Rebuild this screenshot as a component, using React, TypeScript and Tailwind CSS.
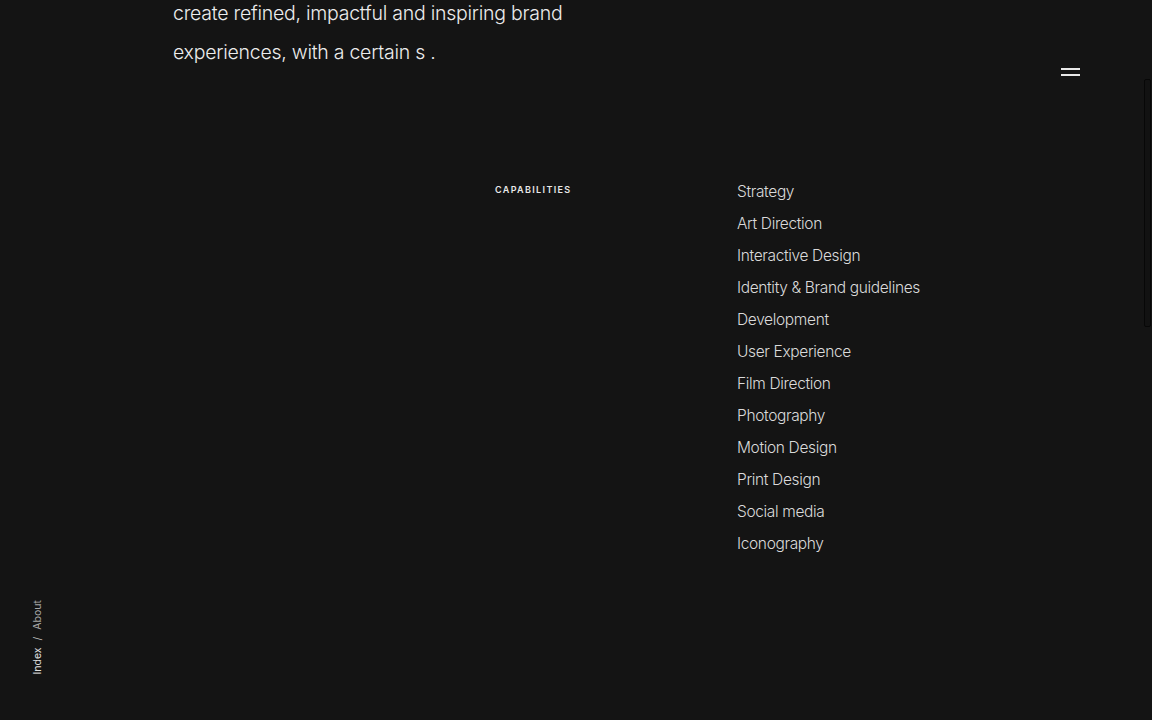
const capabilities = [
  'Strategy',
  'Art Direction',
  'Interactive Design',
  'Identity & Brand guidelines',
  'Development',
  'User Experience',
  'Film Direction',
  'Photography',
  'Motion Design',
  'Print Design',
  'Social media',
  'Iconography',
];

export default function App() {
  return (
    <div className="relative h-[720px] w-full overflow-hidden bg-[#141414] font-['Inter',sans-serif] text-[#e4e4e4]">
      <main className="pl-[173px]">
        <p className="-mt-[6px] w-[440px] text-[19.5px] font-light leading-[39px] tracking-[-0.25px] text-[#ececec]">
          create refined, impactful and inspiring brand experiences, with a certain s .
        </p>

        <section className="mt-[104px] flex">
          <div className="w-[322px]" />
          <div className="w-[242px] pt-[8px]">
            <h2 className="text-[9px] font-semibold uppercase leading-[12px] tracking-[1.35px] text-[#e8e8e8]">
              Capabilities
            </h2>
          </div>
          <ul className="flex flex-col">
            {capabilities.map((item) => (
              <li key={item} className="text-[15.5px] font-light leading-[32px] tracking-[-0.35px] text-[#dadada]">
                {item}
              </li>
            ))}
          </ul>
        </section>
      </main>

      <button aria-label="Menu" className="absolute left-[1061px] top-[68px] flex w-[19px] flex-col gap-[4px]">
        <span className="block h-[2px] w-full bg-[#e8e8e8]" />
        <span className="block h-[2px] w-full bg-[#e8e8e8]" />
      </button>

      <div className="absolute left-[1144px] top-[79px] h-[248px] w-[7px] rounded-[2px] border border-[#070707] bg-[#121212]" />

      <nav className="absolute left-[30px] top-[598px] flex h-[78px] w-[16px] items-center justify-center">
        <div className="flex -rotate-90 items-center gap-[7px] whitespace-nowrap text-[10.5px] leading-none">
          <span className="text-[#e0e0e0]">Index</span>
          <span className="text-[#c4c4c4]">/</span>
          <span className="text-[#a6a6a6]">About</span>
        </div>
      </nav>
    </div>
  );
}
